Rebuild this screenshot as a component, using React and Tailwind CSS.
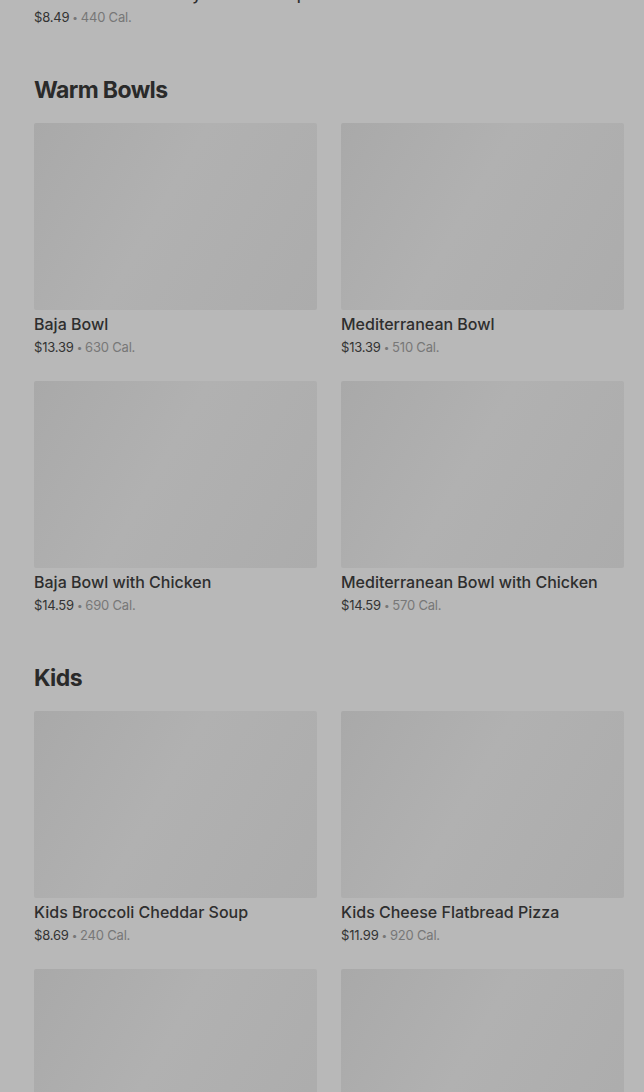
import React from "react";

const sections = [
  {
    title: "Warm Bowls",
    items: [
      { name: "Baja Bowl", price: "$13.39", cal: "630 Cal." },
      { name: "Mediterranean Bowl", price: "$13.39", cal: "510 Cal." },
      { name: "Baja Bowl with Chicken", price: "$14.59", cal: "690 Cal." },
      { name: "Mediterranean Bowl with Chicken", price: "$14.59", cal: "570 Cal." },
    ],
  },
  {
    title: "Kids",
    items: [
      { name: "Kids Broccoli Cheddar Soup", price: "$8.69", cal: "240 Cal." },
      { name: "Kids Cheese Flatbread Pizza", price: "$11.99", cal: "920 Cal." },
      { name: "Kids Turkey Sandwich", price: "$7.49", cal: "350 Cal." },
      { name: "Kids Grilled Cheese", price: "$7.29", cal: "380 Cal." },
    ],
  },
];

function Meta({ price, cal }) {
  return (
    <div className="mt-[4px] flex items-center gap-[3px] text-[13px] leading-[18px] tracking-[-0.2px] whitespace-nowrap">
      <span className="text-[#333333]">{price}</span>
      <span className="text-[#777777] text-[10px]">•</span>
      <span className="text-[#777777]">{cal}</span>
    </div>
  );
}

function Card({ item }) {
  return (
    <div className="flex flex-col">
      <div className="h-[187px] rounded-[2px] bg-[linear-gradient(120deg,#a9a9a9_0%,#b1b1b1_45%,#acacac_100%)]" />
      <div className="mt-[4px] text-[16px] leading-5 font-medium text-[#2e2e2e] whitespace-nowrap">
        {item.name}
      </div>
      <Meta price={item.price} cal={item.cal} />
    </div>
  );
}

export default function App() {
  return (
    <div
      className="min-h-[1092px] bg-[#b8b8b8] overflow-hidden pl-[34px] pr-[20px]"
      style={{ fontFamily: "Inter, 'Noto Sans', sans-serif" }}
    >
      <div className="-mt-[16px]">
        <div className="text-[16px] leading-5 font-medium text-[#2e2e2e] whitespace-nowrap">
          Broccoli Bowl Creamy Tomato Soup
        </div>
        <Meta price="$8.49" cal="440 Cal." />
      </div>
      {sections.map((s) => (
        <section key={s.title} className="mt-[50px]">
          <h2 className="text-[23px] leading-[28px] font-bold tracking-[-0.6px] text-[#2a2a2a]">
            {s.title}
          </h2>
          <div className="mt-[19px] grid grid-cols-2 gap-x-[24px] gap-y-[25px]">
            {s.items.map((it) => (
              <Card key={it.name} item={it} />
            ))}
          </div>
        </section>
      ))}
    </div>
  );
}
